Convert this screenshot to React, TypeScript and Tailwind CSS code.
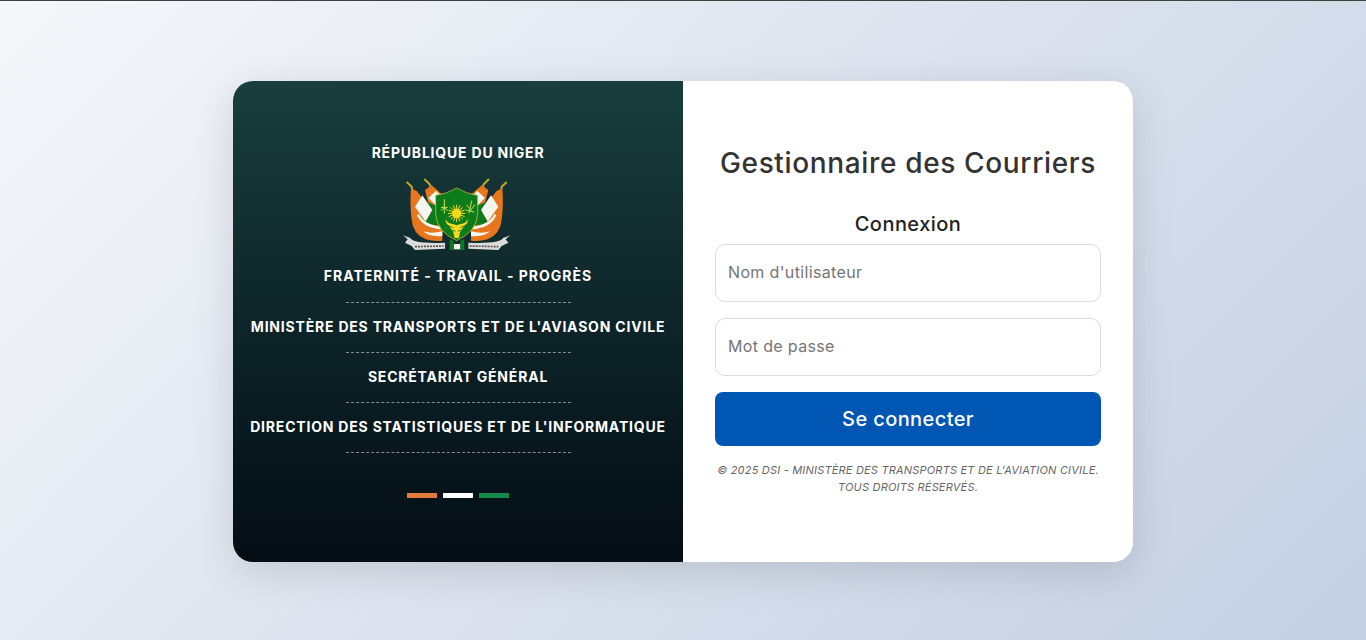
import React from 'react';

const Emblem = () => {
  const flag = (
    <g>
      {/* spears */}
      <path d="M35,36 L50,50 L51,58" fill="none" stroke="#c9a820" strokeWidth="6" />
      <path d="M88,27 L104,43 L108,54" fill="none" stroke="#c9a820" strokeWidth="6" />
      {/* back flag */}
      <path d="M90,60 L110,46 L144,76 L134,112 L100,100 Z" fill="#e8761c" />
      <path d="M100,84 L123,62 L144,84 L130,114 Z" fill="#f4f4ee" />
      <path d="M98,96 L132,112 L130,170 L100,150 Z" fill="#0e7a20" />
      {/* front flag */}
      <path d="M48,55 L66,64 L124,140 L142,166 L142,212 Q118,216 92,208 Q54,192 50,150 Q44,100 48,55 Z" fill="#e8761c" />
      <path d="M60,110 L82,76 L112,120 L92,155 Z" fill="#f6f6f0" />
      <path d="M112,120 L126,136 L130,166 Q106,166 92,155 Z" fill="#0e7a20" />
      <path d="M72,132 Q88,166 142,170 L142,178 Q84,176 66,136 Z" fill="#f6f6f0" />
      <path d="M84,184 Q110,192 142,184 L142,198 Q104,202 84,184 Z" fill="#f6f6f0" />
    </g>
  );
  return (
    <svg viewBox="24 24 330 222" className="w-[110px] h-[74px]">
      {flag}
      <g transform="translate(370,0) scale(-1,1)">{flag}</g>
      {/* ribbons */}
      <path d="M24,196 L46,204 Q56,222 150,218 L150,236 L60,240 L50,228 L30,218 L38,208 Z" fill="#dcdcd8" />
      <path d="M346,196 L324,204 Q314,222 220,218 L220,236 L310,240 L320,228 L340,218 L332,208 Z" fill="#dcdcd8" />
      <path d="M60,230 L146,228 M224,228 L310,230" stroke="#555" strokeWidth="5" strokeDasharray="6 3" fill="none" />
      {/* shield */}
      <path d="M185,54 Q155,72 122,76 L122,130 Q124,185 185,212 Q246,185 248,130 L248,76 Q215,72 185,54 Z" fill="#0c7c1b" stroke="#d8d040" strokeWidth="2" />
      <rect x="176" y="222" width="20" height="16" fill="#f2f2ee" />
      <path d="M164,208 L164,240 L176,240 L176,212 Z M196,212 L196,240 L208,240 L208,208 Z" fill="#0e7a20" />
      {/* sun */}
      <circle cx="185" cy="130" r="14" fill="#f8d81c" />
      <g stroke="#f8d81c" strokeWidth="3">
        <path d="M185,104 V156 M159,130 H211 M167,112 L203,148 M203,112 L167,148" />
        <path d="M175,106 L195,154 M195,106 L175,154 M161,120 L209,140 M161,140 L209,120" />
      </g>
      {/* symbols */}
      <path d="M148,88 V130 M138,112 H158 M138,122 L148,112 L158,122" fill="none" stroke="#cfe04a" strokeWidth="3" />
      <path d="M230,92 L222,130 M214,104 L226,118 M240,104 L226,122 M212,120 L238,126" fill="none" stroke="#cfe04a" strokeWidth="3" />
      {/* antelope head */}
      <path d="M152,146 Q150,166 172,170 L180,176 H190 L198,170 Q220,166 218,146 Q214,160 196,162 L185,166 L174,162 Q156,160 152,146 Z" fill="#f8d81c" />
      <path d="M164,170 L178,174 L192,174 L206,170 L196,184 L191,204 H179 L174,184 Z" fill="#f8d81c" />
      <path d="M174,180 L181,184 M196,180 L189,184" stroke="#0c7c1b" strokeWidth="3" />
    </svg>
  );
};

const lines = [
  "MINISTÈRE DES TRANSPORTS ET DE L'AVIASON CIVILE",
  'SECRÉTARIAT GÉNÉRAL',
  "DIRECTION DES STATISTIQUES ET DE L'INFORMATIQUE",
];

const Divider = () => <div className="w-[225px] border-t border-dashed border-white/50" />;

export default function App() {
  return (
    <div className="h-[640px] overflow-hidden flex flex-col bg-[linear-gradient(135deg,#f5f7fa,#c3cfe2)] font-['Inter','Liberation_Sans',sans-serif]">
      <div className="h-px bg-[#3c423c]" />
      <div className="flex-1 flex justify-center items-start pt-[80px]">
        <div className="w-[900px] h-[481px] flex rounded-[20px] overflow-hidden shadow-[0_10px_40px_rgba(0,0,0,0.13)]">
          {/* left panel */}
          <div className="w-[450px] pt-[61px] flex flex-col items-center text-white bg-gradient-to-b from-[#193e3e] to-[#040d14]">
            <p className="text-[14px] leading-[21px] font-bold tracking-[0.8px]">RÉPUBLIQUE DU NIGER</p>
            <div className="mt-[15px] mb-[14px]">
              <Emblem />
            </div>
            <p className="text-[14px] leading-[21px] font-bold tracking-[1px] pb-[15px] -mt-px">FRATERNITÉ - TRAVAIL - PROGRÈS</p>
            <div className="mt-px">
              <Divider />
            </div>
            {lines.map(line => (
              <React.Fragment key={line}>
                <p className="text-[14px] leading-[21px] font-bold tracking-[0.8px] pt-[13px] pb-[15px] whitespace-nowrap">{line}</p>
                <Divider />
              </React.Fragment>
            ))}
            <div className="flex gap-[6px] mt-[40px]">
              <span className="w-[30px] h-[5px] bg-[#e07b39]" />
              <span className="w-[30px] h-[5px] bg-white" />
              <span className="w-[30px] h-[5px] bg-[#138a4a]" />
            </div>
          </div>

          {/* right panel */}
          <div className="w-[450px] bg-white px-[32px] pt-[61px] flex flex-col">
            <h1 className="text-[28px] leading-[42px] font-medium text-[#333] text-center whitespace-nowrap tracking-[0.65px]">Gestionnaire des Courriers</h1>
            <h2 className="mt-[25px] text-[20px] leading-[30px] font-medium text-[#222] text-center tracking-[0.45px]">Connexion</h2>
            <input
              type="text"
              placeholder="Nom d'utilisateur"
              className="mt-[5px] h-[58px] w-full border border-[#ddd] rounded-[10px] px-[12px] pb-[2px] text-[16px] tracking-[0.35px] placeholder:text-[#757575] outline-none"
            />
            <input
              type="password"
              placeholder="Mot de passe"
              className="mt-[16px] h-[58px] w-full border border-[#ddd] rounded-[10px] px-[12px] pb-[2px] text-[16px] tracking-[0.35px] placeholder:text-[#757575] outline-none"
            />
            <button className="mt-[16px] h-[54px] w-full rounded-[8px] bg-[#0056b3] text-white text-[20px] font-medium tracking-[0.4px]">Se connecter</button>
            <p className="mt-[16px] text-[11px] leading-[17px] italic uppercase text-[#666] text-center tracking-[0.2px] whitespace-nowrap">
              © 2025 DSI - Ministère des Transports et de l'Aviation Civile.
              <br />
              Tous droits réservés.
            </p>
          </div>
        </div>
      </div>
    </div>
  );
}
